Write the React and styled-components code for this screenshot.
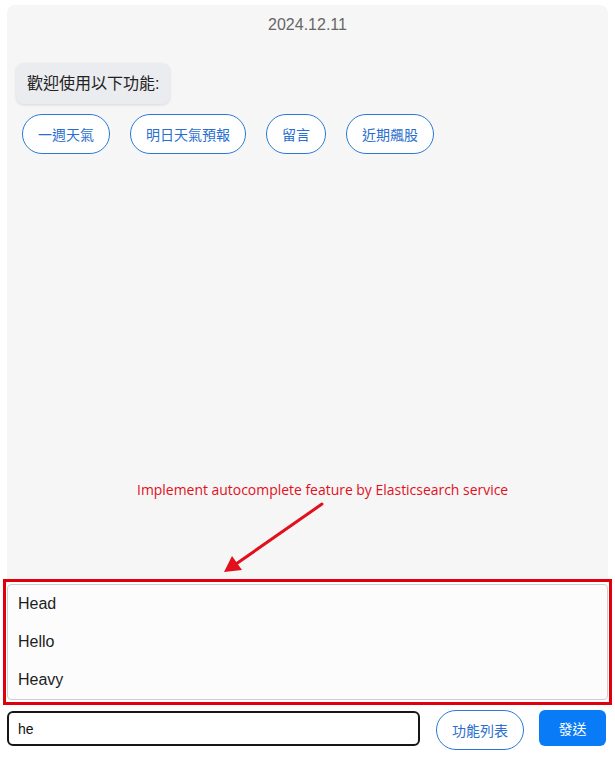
import React from 'react';
import styled, { createGlobalStyle } from 'styled-components';

const GlobalStyle = createGlobalStyle`
  html, body {
    margin: 0;
    padding: 0;
    background: #ffffff;
    font-family: "Liberation Sans", Arial, "Noto Sans CJK TC", sans-serif;
  }
`;

// 전체
const Page = styled.div`
  position: relative;
  display: flex;
  flex-direction: column;
  height: 760px;
  padding: 5px 7px 10px 7px;
  box-sizing: border-box;
`;

// 채팅 영역
const ChatPanel = styled.section`
  flex: 1;
  display: flex;
  flex-direction: column;
  align-items: flex-start;
  background: #f6f6f6;
  border-radius: 8px 8px 0 0;
  padding: 10px 0 0 0;
`;

const DateLabel = styled.div`
  align-self: stretch;
  text-align: center;
  color: #666666;
  font-size: 16px;
  line-height: 20px;
`;

const Bubble = styled.div`
  margin: 28px 0 0 9px;
  padding: 10px 11px;
  background: #eaecef;
  border-radius: 8px;
  box-shadow: 0 1px 3px rgba(0, 0, 0, 0.12);
  color: #222222;
  font-size: 16px;
  line-height: 21px;
`;

const QuickReplies = styled.div`
  display: flex;
  gap: 20px;
  margin: 10px 0 0 15px;
`;

const OutlineButton = styled.button`
  height: 40px;
  padding: 0 15px;
  background: #ffffff;
  border: 1px solid #2b78d8;
  border-radius: 20px;
  color: #2a6fcf;
  font-family: inherit;
  font-size: 14px;
  white-space: nowrap;
  cursor: pointer;
`;

// 자동완성 (annotated)
const Highlight = styled.div`
  margin: 0 -4px;
  border: 3px solid #e0000b;
  padding: 2px 1px 0 1px;
  height: 126px;
  box-sizing: border-box;
`;

const SuggestList = styled.ul`
  list-style: none;
  margin: 0;
  padding: 0;
  background: #fcfcfc;
  border: 1px solid #cfcfcf;
  border-radius: 4px;
`;

const SuggestItem = styled.li`
  height: 38px;
  line-height: 38px;
  padding: 0 10px;
  font-size: 16px;
  color: #1e1e1e;
`;

// 입력
const InputRow = styled.form`
  display: flex;
  align-items: flex-start;
  margin: 5px 2px 0 0;
`;

const TextInput = styled.input`
  flex: 1;
  height: 35px;
  box-sizing: border-box;
  border: 2px solid #161616;
  border-radius: 6px;
  padding: 0 9px;
  font-family: inherit;
  font-size: 14px;
  color: #111111;
  background: #ffffff;
  outline: none;
  margin-top: 1px;
  caret-color: #111111;
`;

const ListButton = styled(OutlineButton)`
  margin-left: 16px;
  padding: 0 15px;
`;

const SendButton = styled.button`
  margin-left: 15px;
  width: 67px;
  height: 36px;
  border: none;
  border-radius: 6px;
  background: #0a7bf7;
  color: #ffffff;
  font-family: inherit;
  font-size: 14px;
  cursor: pointer;
`;

// 주석
const Note = styled.div`
  position: absolute;
  top: 481px;
  left: 137px;
  color: #e2101c;
  font-family: "Open Sans", "Liberation Sans", sans-serif;
  font-size: 13.95px;
  line-height: 18px;
  white-space: nowrap;
`;

const Arrow = styled.svg`
  position: absolute;
  top: 500px;
  left: 218px;
`;

const features = ['一週天氣', '明日天氣預報', '留言', '近期飆股'];
const suggestions = ['Head', 'Hello', 'Heavy'];

export default function App() {
  return (
    <>
      <GlobalStyle />
      <Page>
        <ChatPanel>
          <DateLabel>2024.12.11</DateLabel>
          <Bubble>歡迎使用以下功能:</Bubble>
          <QuickReplies>
            {features.map((f) => (
              <OutlineButton key={f} type="button">
                {f}
              </OutlineButton>
            ))}
          </QuickReplies>
        </ChatPanel>
        <Highlight>
          <SuggestList>
            {suggestions.map((s) => (
              <SuggestItem key={s}>{s}</SuggestItem>
            ))}
          </SuggestList>
        </Highlight>
        <InputRow onSubmit={(e) => e.preventDefault()}>
          <TextInput defaultValue="he" autoFocus />
          <ListButton type="button">功能列表</ListButton>
          <SendButton type="submit">發送</SendButton>
        </InputRow>
        <Note>Implement autocomplete feature by Elasticsearch service</Note>
        <Arrow width="110" height="80" viewBox="0 0 110 80">
          <line x1="104" y1="4" x2="18" y2="64" stroke="#e2101c" strokeWidth="3" strokeLinecap="round" />
          <polygon points="6,72 14,56 24,70" fill="#e2101c" />
        </Arrow>
      </Page>
    </>
  );
}
